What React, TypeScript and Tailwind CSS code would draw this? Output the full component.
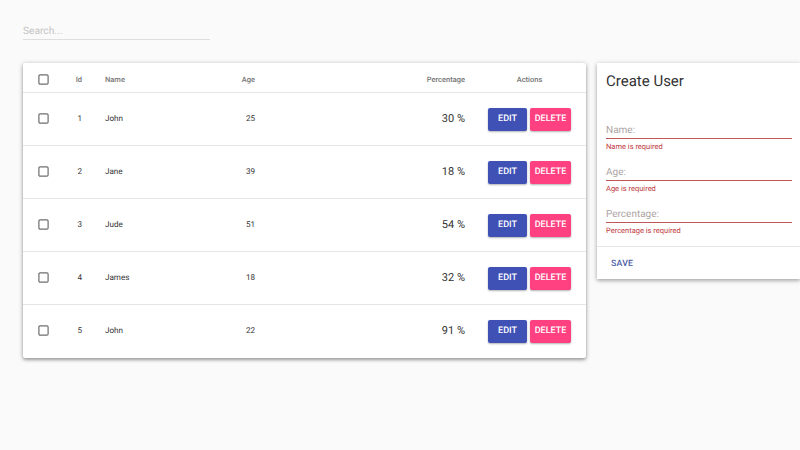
import React from "react";

const users = [
  { id: 1, name: "John", age: 25, pct: 30 },
  { id: 2, name: "Jane", age: 39, pct: 18 },
  { id: 3, name: "Jude", age: 51, pct: 54 },
  { id: 4, name: "James", age: 18, pct: 32 },
  { id: 5, name: "John", age: 22, pct: 91 },
];

function Check() {
  return (
    <svg width="11" height="11" viewBox="0 0 11 11" className="block">
      <rect x="0.9" y="0.9" width="9.2" height="9.2" rx="1.2" fill="none" stroke="#6e6e6e" strokeWidth="1.2" />
    </svg>
  );
}

function Field({ label, error }: { label: string; error: string }) {
  return (
    <div className="h-[42px]">
      <div className="h-[18px] border-b border-[#c0555a] text-[10px] leading-[19px] text-[#aca4a4]">{label}</div>
      <div className="mt-[2px] text-[7.5px] leading-[12px] text-[#c0393e]">{error}</div>
    </div>
  );
}

export default function App() {
  return (
    <div className="h-[450px] w-[800px] overflow-hidden bg-[#fafafa] font-['Roboto',sans-serif] [text-rendering:geometricPrecision] [will-change:opacity]">
      <div className="ml-[23px] h-[63px] pt-[25px]">
        <div className="h-[15px] w-[187px] border-b border-[#dedede] text-[10.2px] leading-[13px] text-[#c4c4c4]">Search...</div>
      </div>
      <div className="flex items-start pl-[23px]">
        <div className="w-[563px] rounded-[2px] bg-white shadow-[0_1px_5px_rgba(0,0,0,0.3),0_2px_3px_rgba(0,0,0,0.2)]">
          <div className="flex h-[30px] items-center border-b border-[#e6e6e6] pl-[15px] pt-[5px] text-[7.5px] font-medium text-[#757575]">
            <div className="-mt-[2px] w-[11px]"><Check /></div>
            <div className="w-[33px] text-right">Id</div>
            <div className="ml-[23px] w-[110px]">Name</div>
            <div className="w-[40px] text-right">Age</div>
            <div className="w-[210px] text-right">Percentage</div>
            <div className="ml-[23px] w-[83px] text-center">Actions</div>
          </div>
          {users.map((u, i) => (
            <div key={u.id} className={`flex h-[53px] items-center border-b pb-[2px] pl-[15px] text-[8.1px] text-[#333333] ${i < 4 ? "border-[#e6e6e6]" : "border-transparent"}`}>
              <div className="w-[11px]"><Check /></div>
              <div className="w-[33px] text-right">{u.id}</div>
              <div className="ml-[23px] w-[110px]">{u.name}</div>
              <div className="w-[40px] text-right">{u.age}</div>
              <div className="mt-[2px] w-[210px] text-right text-[11px] text-[#333333]">{u.pct} %</div>
              <div className="ml-[23px] mt-[2px] flex gap-[3px]">
                <div className="flex h-[23px] w-[39px] items-center justify-center rounded-[2px] bg-[#3f51b5] pt-[1px] text-[9px] font-medium text-white shadow-[0_1px_2px_rgba(0,0,0,0.3)]">EDIT</div>
                <div className="flex h-[23px] w-[41px] items-center justify-center rounded-[2px] bg-[#ff4081] pt-[1px] text-[9px] font-medium text-white shadow-[0_1px_2px_rgba(0,0,0,0.3)]">DELETE</div>
              </div>
            </div>
          ))}
        </div>
        <div className="ml-[11px] h-[216px] w-[203px] bg-white shadow-[0_1px_5px_rgba(0,0,0,0.25),0_2px_3px_rgba(0,0,0,0.15)]">
          <div className="h-[58px] pl-[9px] pt-[8px] text-[15px] leading-[20px] text-[#333333]">Create User</div>
          <div className="h-[125px] pl-[9px] pr-[8px]">
            <Field label="Name:" error="Name is required" />
            <Field label="Age:" error="Age is required" />
            <Field label="Percentage:" error="Percentage is required" />
          </div>
          <div className="flex h-[33px] items-center border-t border-[#e6e6e6] pl-[14px] pt-[3px] text-[8.75px] font-medium tracking-[0.2px] text-[#4a5aa8]">SAVE</div>
        </div>
      </div>
    </div>
  );
}
